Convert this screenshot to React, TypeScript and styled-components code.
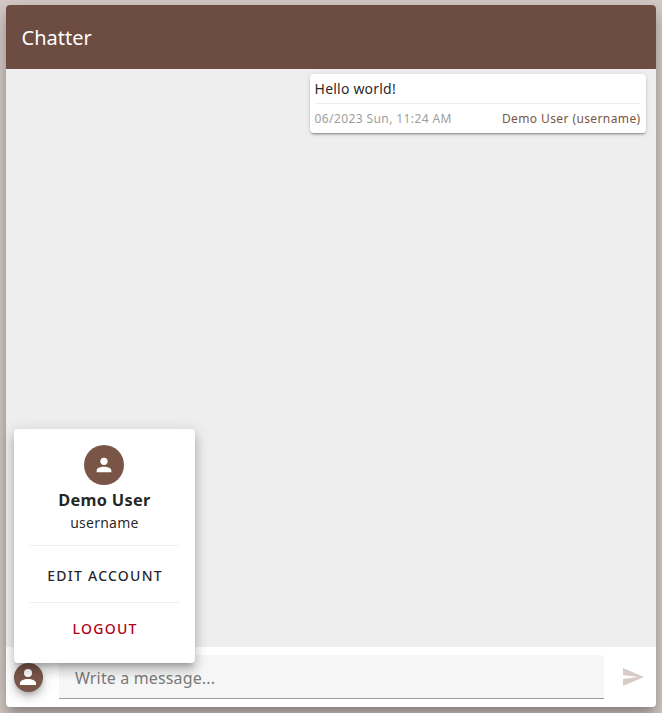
import React from 'react';
import styled, { createGlobalStyle } from 'styled-components';

const GlobalStyle = createGlobalStyle`
  * { box-sizing: border-box; }
  body {
    margin: 0;
    background: #d7ccc8;
    color: rgba(0, 0, 0, 0.87);
    font-family: "Noto Sans", sans-serif;
    overflow: hidden;
  }
`;

const Page = styled.div`
  height: 713px;
  padding: 5px 6px 6px;
`;

const ChatCard = styled.main`
  position: relative;
  display: flex;
  flex-direction: column;
  height: 702px;
  background: #fff;
  border-radius: 4px;
  box-shadow: 0 7px 8px -4px rgba(0, 0, 0, 0.2), 0 12px 17px 2px rgba(0, 0, 0, 0.14),
    0 5px 22px 4px rgba(0, 0, 0, 0.12);
`;

const Toolbar = styled.header`
  display: flex;
  align-items: center;
  height: 64px;
  padding: 2px 15.6px 0;
  border-radius: 4px 4px 0 0;
  background: #6d4c41;
  color: #fff;
`;

const Title = styled.h1`
  margin: 0;
  font-size: 20px;
  font-weight: 400;
  line-height: 28px;
`;

const Messages = styled.section`
  flex: 1;
  display: flex;
  flex-direction: column;
  align-items: flex-end;
  padding: 5px 10px;
  background: #eee;
`;

const Message = styled.article`
  width: 336px;
  height: 59px;
  padding: 5px 5.4px 5px 4.6px;
  background: #fff;
  border-radius: 4px;
  box-shadow: 0 3px 1px -2px rgba(0, 0, 0, 0.2), 0 2px 2px 0 rgba(0, 0, 0, 0.14),
    0 1px 5px 0 rgba(0, 0, 0, 0.12);
`;

const MessageText = styled.p`
  margin: 0;
  font-size: 14px;
  line-height: 20px;
  letter-spacing: 0.2px;
`;

const MessageMeta = styled.footer`
  display: flex;
  justify-content: space-between;
  margin-top: 4px;
  padding-top: 5px;
  border-top: 1px solid #eee;
  font-size: 12px;
  line-height: 20px;
  letter-spacing: 0.4px;
`;

const Timestamp = styled.time`
  color: #9e9e9e;
`;

const Author = styled.span`
  color: #795548;
`;

const Composer = styled.footer`
  display: flex;
  height: 60px;
  padding: 8px 11px 8px 8px;
`;

const Avatar = styled.div<{ $size: number; $raised?: boolean }>`
  display: flex;
  flex: none;
  align-items: center;
  justify-content: center;
  width: ${(p) => p.$size}px;
  height: ${(p) => p.$size}px;
  padding-right: ${(p) => (p.$raised ? 1 : 0)}px;
  border-radius: 50%;
  background: #795548;
  color: #fff;
  box-shadow: ${(p) =>
    p.$raised
      ? '0 3px 5px -1px rgba(0,0,0,.2), 0 6px 10px 0 rgba(0,0,0,.14), 0 1px 18px 0 rgba(0,0,0,.12)'
      : 'none'};
`;

const ProfileButton = styled.button`
  align-self: center;
  margin: 0 16px 0 0;
  padding: 0;
  border: 0;
  border-radius: 50%;
  background: none;
`;

const Field = styled.input`
  flex: 1;
  min-width: 0;
  height: 44px;
  padding: 2px 16px 0;
  border: 0;
  border-bottom: 1px solid #9c9c9c;
  border-radius: 4px 4px 0 0;
  outline: 0;
  background: #f6f6f6;
  font: 400 16px/24px "Noto Sans", sans-serif;
  letter-spacing: 0.144px;
  &::placeholder { color: #7a7a7a; opacity: 1; }
`;

const SendButton = styled.button`
  display: flex;
  align-self: center;
  margin: 0 0 0 17px;
  padding: 0;
  border: 0;
  background: none;
  color: #d7ccc8;
`;

const Menu = styled.aside`
  position: absolute;
  left: 8px;
  bottom: 44px;
  display: flex;
  flex-direction: column;
  align-items: center;
  width: 180.8px;
  height: 234px;
  padding: 16px;
  background: #fff;
  border-radius: 4px;
  box-shadow: 0 5px 5px -3px rgba(0, 0, 0, 0.2), 0 8px 10px 1px rgba(0, 0, 0, 0.14),
    0 3px 14px 2px rgba(0, 0, 0, 0.12);
`;

const Name = styled.h2`
  margin: 3px 0 0;
  font-size: 16.38px;
  font-weight: 700;
  line-height: 24px;
  letter-spacing: 0.29px;
`;

const Username = styled.p`
  margin: 1px 0 0;
  font-size: 14px;
  line-height: 20px;
  letter-spacing: 0.25px;
`;

const Divider = styled.hr<{ $top: number }>`
  align-self: stretch;
  margin: ${(p) => p.$top}px 0 0;
  border: 0;
  border-top: 1px solid #eee;
`;

const MenuAction = styled.button<{ $top: number; $danger?: boolean }>`
  height: 36px;
  margin: ${(p) => p.$top}px 0 0;
  padding: 0 15px 0 16.4px;
  border: 0;
  background: none;
  color: ${(p) => (p.$danger ? '#b00020' : 'rgba(0, 0, 0, 0.87)')};
  font: 500 14px/20px "Noto Sans", sans-serif;
  letter-spacing: 1.25px;
  text-transform: uppercase;
`;

const Icon = ({ path, size = 24 }: { path: string; size?: number }) => (
  <svg width={size} height={size} viewBox="0 0 24 24" fill="currentColor" aria-hidden="true">
    <path d={path} />
  </svg>
);

const accountPath =
  'M12,4A4,4 0 0,1 16,8A4,4 0 0,1 12,12A4,4 0 0,1 8,8A4,4 0 0,1 12,4M12,14C16.42,14 20,15.79 20,18V20H4V18C4,15.79 7.58,14 12,14Z';
const sendPath = 'M2,21L23,12L2,3V10L17,12L2,14V21Z';

export default function App() {
  return (
    <Page>
      <GlobalStyle />
      <ChatCard>
        <Toolbar>
          <Title>Chatter</Title>
        </Toolbar>
        <Messages>
          <Message>
            <MessageText>Hello world!</MessageText>
            <MessageMeta>
              <Timestamp>06/2023 Sun, 11:24 AM</Timestamp>
              <Author>Demo User (username)</Author>
            </MessageMeta>
          </Message>
        </Messages>
        <Composer>
          <ProfileButton aria-label="Account">
            <Avatar $size={29} $raised>
              <Icon path={accountPath} />
            </Avatar>
          </ProfileButton>
          <Field placeholder="Write a message..." />
          <SendButton aria-label="Send">
            <Icon path={sendPath} />
          </SendButton>
        </Composer>
        <Menu>
          <Avatar $size={40}>
            <Icon path={accountPath} size={22} />
          </Avatar>
          <Name>Demo User</Name>
          <Username>username</Username>
          <Divider $top={12} />
          <MenuAction $top={12}>Edit account</MenuAction>
          <Divider $top={8} />
          <MenuAction $top={8} $danger>Logout</MenuAction>
        </Menu>
      </ChatCard>
    </Page>
  );
}
